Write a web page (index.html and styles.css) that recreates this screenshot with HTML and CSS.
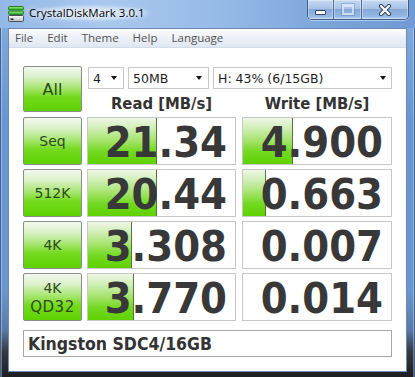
FILE: index.html
```html
<!DOCTYPE html>
<html>
<head>
<meta charset="utf-8">
<title>CrystalDiskMark 3.0.1</title>
<link rel="stylesheet" href="styles.css">
</head>
<body>
<div class="window">
  <div class="titlebar">
    <svg class="app-icon" width="16" height="16" viewBox="0 0 16 16">
      <defs>
        <linearGradient id="gslab" x1="0" y1="0" x2="0" y2="1">
          <stop offset="0" stop-color="#9ef07a"/>
          <stop offset="1" stop-color="#1fa81f"/>
        </linearGradient>
        <linearGradient id="gdrive" x1="0" y1="0" x2="0" y2="1">
          <stop offset="0" stop-color="#ffffff"/>
          <stop offset="1" stop-color="#b8bcc2"/>
        </linearGradient>
      </defs>
      <rect x="0.5" y="0.5" width="15" height="3.5" rx="1" fill="url(#gslab)" stroke="#2a7a2a"/>
      <rect x="0.5" y="5" width="15" height="3.5" rx="1" fill="url(#gslab)" stroke="#2a7a2a"/>
      <rect x="0.5" y="9.5" width="15" height="6" rx="1" fill="url(#gdrive)" stroke="#4a4f58"/>
      <rect x="2.5" y="12.5" width="3" height="1.5" fill="#2a2a2a"/>
    </svg>
    <span class="title">CrystalDiskMark 3.0.1</span>
    <div class="caption">
      <div class="cb cb-min"><span class="min-glyph"></span></div>
      <div class="cb cb-max"><span class="max-glyph"></span></div>
      <div class="cb cb-close">
        <svg width="14" height="12" viewBox="0 0 14 12">
          <path d="M3 2 L11 10 M11 2 L3 10" stroke="#33455f" stroke-width="4.2" stroke-linecap="round" fill="none"/>
          <path d="M3 2 L11 10 M11 2 L3 10" stroke="#ffffff" stroke-width="2.2" stroke-linecap="round" fill="none"/>
        </svg>
      </div>
    </div>
  </div>
  <div class="client">
    <div class="menubar">
      <span class="menu-item">File</span>
      <span class="menu-item">Edit</span>
      <span class="menu-item">Theme</span>
      <span class="menu-item">Help</span>
      <span class="menu-item">Language</span>
    </div>
    <div class="content">
      <div class="top">
        <div class="btn btn-all">All</div>
        <div class="top-right">
          <div class="selects">
            <div class="select s-count"><span>4</span><i class="arrow"></i></div>
            <div class="select s-size"><span>50MB</span><i class="arrow"></i></div>
            <div class="select s-drive"><span>H: 43% (6/15GB)</span><i class="arrow"></i></div>
          </div>
          <div class="headers">
            <div class="head">Read [MB/s]</div>
            <div class="head">Write [MB/s]</div>
          </div>
        </div>
      </div>
      <div class="rows">
        <div class="row">
          <div class="btn">Seq</div>
          <div class="cell"><div class="bar" style="width:69px"></div><span class="val">21.34</span></div>
          <div class="cell write"><div class="bar" style="width:50px"></div><span class="val">4.900</span></div>
        </div>
        <div class="row">
          <div class="btn">512K</div>
          <div class="cell"><div class="bar" style="width:69px"></div><span class="val">20.44</span></div>
          <div class="cell write"><div class="bar" style="width:23px"></div><span class="val">0.663</span></div>
        </div>
        <div class="row">
          <div class="btn">4K</div>
          <div class="cell"><div class="bar" style="width:44px"></div><span class="val">3.308</span></div>
          <div class="cell write"><span class="val">0.007</span></div>
        </div>
        <div class="row">
          <div class="btn btn-two"><span>4K</span><span class="qd">QD32</span></div>
          <div class="cell"><div class="bar" style="width:46px"></div><span class="val">3.770</span></div>
          <div class="cell write"><span class="val">0.014</span></div>
        </div>
      </div>
      <div class="comment">Kingston SDC4/16GB</div>
    </div>
  </div>
</div>
</body>
</html>
```

FILE: styles.css
```css
html, body {
  margin: 0;
  padding: 0;
}
body {
  width: 415px;
  height: 377px;
  overflow: hidden;
  background: #1a1b1e;
}
.window {
  width: 415px;
  height: 377px;
  box-sizing: border-box;
  padding: 0 8px 5px 8px;
  background: linear-gradient(to bottom, #9cbfe9 0px, #7ea8dc 30px, #6796d2 120px, #6a96cf 290px, #5a7aa6 330px, #34383f 352px, #1d1e21 377px);
  box-shadow: inset 1px 0 0 #3d5f90, inset -1px 0 0 #3d5f90, inset 2px 0 0 rgba(255,255,255,0.35), inset -2px 0 0 rgba(255,255,255,0.35);
}
.titlebar {
  height: 28px;
  margin: 0 -8px;
  padding: 0 6px 0 8px;
  display: flex;
  align-items: flex-start;
  background: linear-gradient(to right, #93b8e6 0%, #a9c8ee 25%, #95b9e6 55%, #7aa4d9 80%, #6f9ad4 100%);
}
.app-icon {
  margin-top: 6px;
  flex: none;
}
.title {
  margin-left: 5px;
  margin-top: 5px;
  padding: 0 6px 0 0;
  font-family: "Open Sans", "Noto Sans", sans-serif;
  font-size: 11.5px;
  line-height: 16px;
  color: #000;
  text-shadow: 0 0 6px rgba(255,255,255,0.95), 0 0 10px rgba(255,255,255,0.8);
  background: radial-gradient(ellipse at center, rgba(235,243,252,0.85) 0%, rgba(220,234,250,0.5) 55%, rgba(220,234,250,0) 75%);
}
.caption {
  margin-left: auto;
  display: flex;
  height: 20px;
  box-sizing: border-box;
  border: 1px solid #3f5c86;
  border-top: none;
  border-radius: 0 0 5px 5px;
  overflow: hidden;
  box-shadow: 0 1px 0 rgba(255,255,255,0.45);
}
.cb {
  height: 19px;
  display: flex;
  align-items: center;
  justify-content: center;
  background: linear-gradient(to bottom, #c4d8f1 0%, #a9c3e6 45%, #87a9d7 50%, #94b7e4 85%, #b4d0f2 100%);
  box-shadow: inset 0 0 0 1px rgba(255,255,255,0.35);
}
.cb-min { width: 25px; }
.cb-max { width: 27px; border-left: 1px solid #4d6b95; }
.cb-close { width: 46px; border-left: 1px solid #4d6b95; }
.min-glyph {
  width: 9px;
  height: 3px;
  margin-top: 5px;
  background: #fff;
  border: 1px solid #34465f;
  border-radius: 1px;
}
.max-glyph {
  width: 8px;
  height: 6px;
  border: 2px solid rgba(225,236,250,0.75);
  border-top-width: 3px;
  box-shadow: 0 0 0 1px rgba(90,120,165,0.35);
}
.client {
  height: 344px;
  box-sizing: border-box;
  border: 1px solid #6c89b2;
  background: #fff;
  display: flex;
  flex-direction: column;
}
.menubar {
  height: 19px;
  box-sizing: border-box;
  border-bottom: 1px solid #d4dce8;
  background: linear-gradient(to bottom, #fbfcfe 0%, #eef2f8 45%, #dfe7f2 100%);
  display: flex;
  gap: 14px;
  padding-left: 6px;
  font-family: "Open Sans", "Noto Sans", sans-serif;
  font-size: 11.5px;
  line-height: 18px;
  color: #525252;
}
.content {
  padding: 18px 14px 0 14px;
  font-family: "DejaVu Sans", sans-serif;
}
.top {
  display: flex;
  gap: 5px;
  height: 46px;
}
.btn {
  width: 59px;
  height: 48px;
  box-sizing: border-box;
  flex: none;
  border: 1px solid #8c8c8c;
  border-radius: 2px;
  background: linear-gradient(to bottom, #f3f9ee 0%, #dcf1cb 22%, #a6e66e 48%, #74da1e 68%, #5ed200 100%);
  display: flex;
  flex-direction: column;
  align-items: center;
  justify-content: center;
  font-family: "DejaVu Sans", sans-serif;
  font-size: 14px;
  line-height: 17px;
  color: #2c4a1a;
}
.btn-all {
  height: 46px;
  font-size: 16px;
}
.btn-two {
  line-height: 19px;
  padding-top: 1px;
}
.btn-two .qd {
  font-size: 15px;
  letter-spacing: 0.5px;
}
.top-right {
  width: 305px;
  display: flex;
  flex-direction: column;
}
.selects {
  display: flex;
  gap: 4px;
  margin-top: 1px;
  margin-left: 1px;
  height: 22px;
}
.select {
  height: 22px;
  box-sizing: border-box;
  border: 1px solid #c9c9c9;
  background: #fff;
  display: flex;
  align-items: center;
  padding: 0 6px 0 4px;
  font-family: "DejaVu Sans", sans-serif;
  font-size: 12.5px;
  color: #1e1e1e;
}
.s-count { width: 36px; }
.s-size { width: 81px; }
.s-drive { width: 179px; padding-right: 5px; }
.arrow {
  margin-left: auto;
  width: 0;
  height: 0;
  border-left: 3.5px solid transparent;
  border-right: 3.5px solid transparent;
  border-top: 4px solid #111;
}
.headers {
  display: grid;
  grid-template-columns: 149px 150px;
  column-gap: 6px;
  height: 23px;
  box-sizing: border-box;
  padding-top: 6px;
}
.head {
  text-align: center;
  font-family: "DejaVu Sans Condensed", "DejaVu Sans", sans-serif;
  font-weight: bold;
  font-size: 16.5px;
  line-height: 17px;
  color: #333;
}
.rows {
  margin-top: 5px;
  display: flex;
  flex-direction: column;
  gap: 4px;
}
.row {
  display: flex;
  gap: 5px;
  height: 48px;
}
.cell {
  width: 149px;
  height: 48px;
  box-sizing: border-box;
  border: 1px solid #c6c6c6;
  background: #fff;
  display: grid;
}
.cell.write {
  width: 150px;
  margin-left: 1px;
}
.bar {
  grid-area: 1 / 1;
  justify-self: start;
  height: 100%;
  box-sizing: border-box;
  border-right: 1px solid #56733f;
  background: linear-gradient(to bottom, #eef7e6 0%, #d4efbc 20%, #a4e36a 50%, #74d924 72%, #5fd200 100%);
}
.val {
  grid-area: 1 / 1;
  justify-self: end;
  align-self: center;
  padding-right: 8px;
  margin-top: 2px;
  font-family: "DejaVu Sans Condensed", "DejaVu Sans", sans-serif;
  font-weight: bold;
  font-size: 43px;
  line-height: 43px;
  color: #383838;
}
.comment {
  margin-top: 9px;
  height: 27px;
  box-sizing: border-box;
  border: 1px solid #a8a8a8;
  padding: 2px 0 0 4px;
  font-family: "DejaVu Sans Condensed", "DejaVu Sans", sans-serif;
  font-weight: bold;
  font-size: 17.5px;
  line-height: 23px;
  color: #333;
}
```
